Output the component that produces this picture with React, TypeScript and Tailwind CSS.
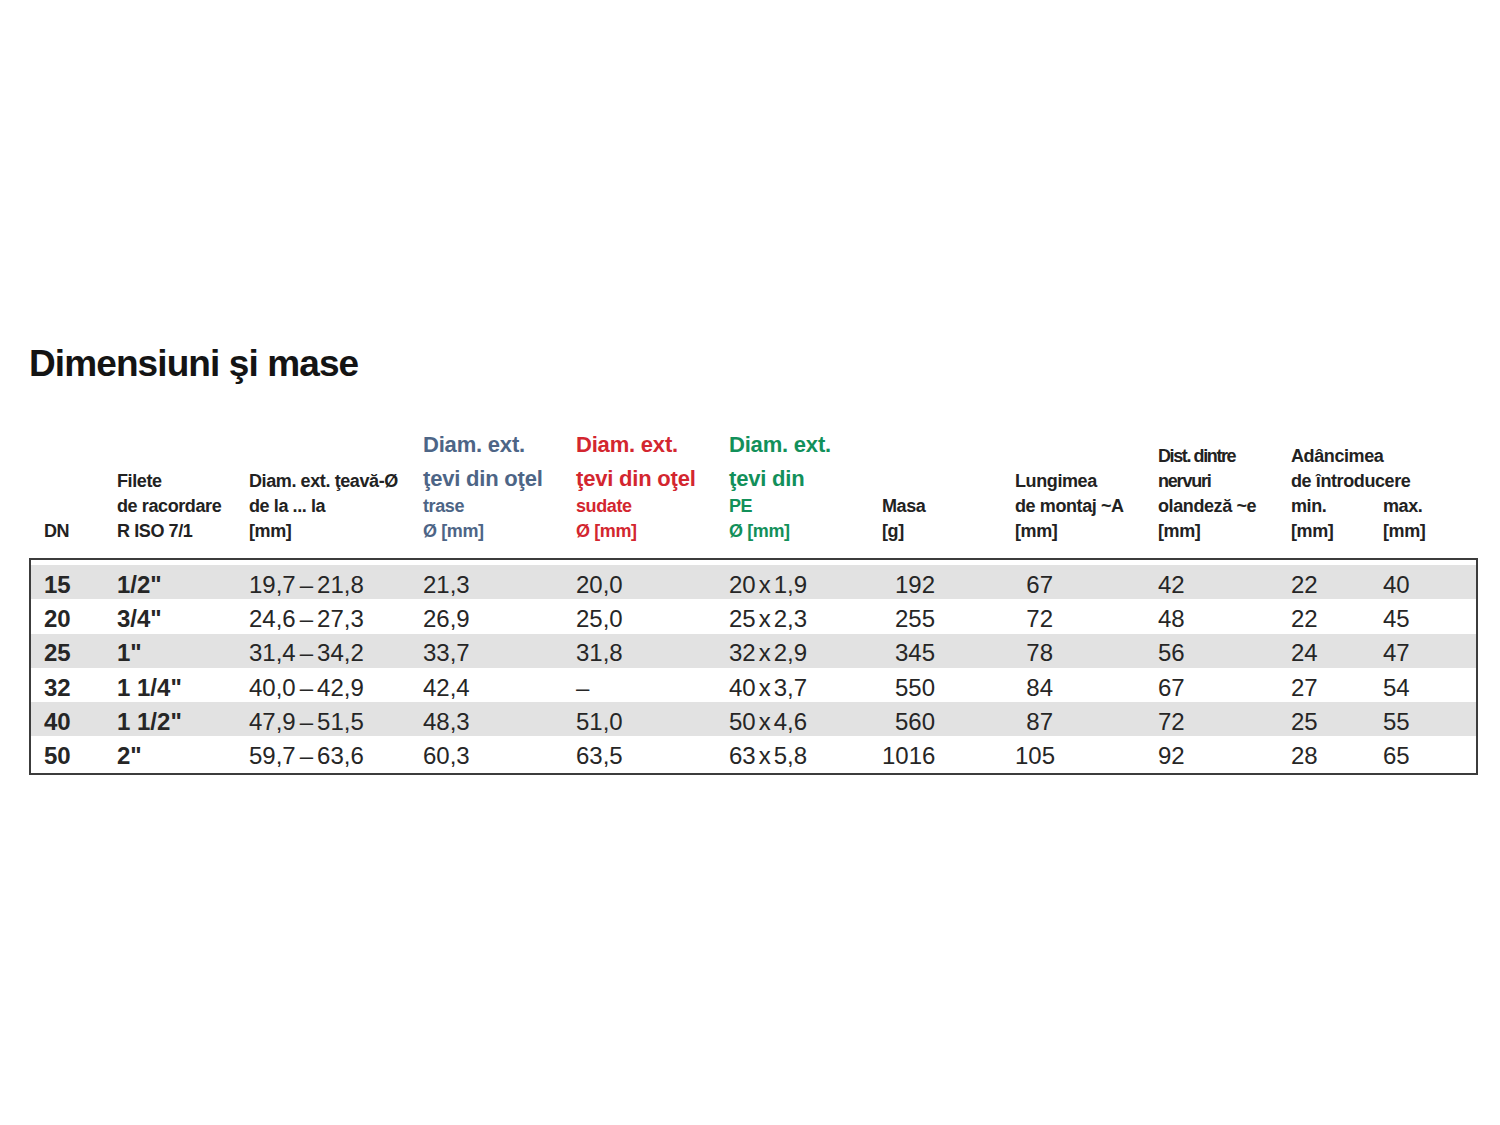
import React from "react";

const rows: string[][] = [
  ["15", "1/2\"", "19,7", "21,8", "21,3", "20,0", "20", "1,9", "192", "67", "42", "22", "40"],
  ["20", "3/4\"", "24,6", "27,3", "26,9", "25,0", "25", "2,3", "255", "72", "48", "22", "45"],
  ["25", "1\"", "31,4", "34,2", "33,7", "31,8", "32", "2,9", "345", "78", "56", "24", "47"],
  ["32", "1 1/4\"", "40,0", "42,9", "42,4", "–", "40", "3,7", "550", "84", "67", "27", "54"],
  ["40", "1 1/2\"", "47,9", "51,5", "48,3", "51,0", "50", "4,6", "560", "87", "72", "25", "55"],
  ["50", "2\"", "59,7", "63,6", "60,3", "63,5", "63", "5,8", "1016", "105", "92", "28", "65"],
];

const gridCols =
  "grid grid-cols-[73px_132px_174px_153px_153px_153px_133px_143px_133px_92px_1fr]";

function HeadCell({ lines, extra }: { lines: React.ReactNode[]; extra?: string }) {
  return (
    <div className={`flex flex-col justify-end ${extra ?? ""}`}>
      {lines.map((l, i) => (
        <div key={i} className="leading-[25px] h-[25px] whitespace-nowrap">
          {l}
        </div>
      ))}
    </div>
  );
}

function ColorHead({ color, l1, l2, l3 }: { color: string; l1: string; l2: string; l3: string }) {
  return (
    <div className={`flex flex-col justify-end ${color}`}>
      <div className="text-[22px] leading-[30px] h-[34px] tracking-[-0.2px] whitespace-nowrap">{l1}</div>
      <div className="text-[22px] leading-[30px] h-[30px] tracking-[-0.2px] whitespace-nowrap">{l2}</div>
      <div className="leading-[25px] h-[25px] whitespace-nowrap">{l3}</div>
      <div className="leading-[25px] h-[25px] whitespace-nowrap">Ø [mm]</div>
    </div>
  );
}

export default function App() {
  return (
    <div
      className="min-h-[1125px] w-[1500px] bg-white text-[#1e1e1e]"
      style={{ fontFamily: '"Liberation Sans", Arial, sans-serif' }}
    >
      <div className="pt-[345px] pl-[29px] w-[1478px]">
        <h1 className="text-[37px] leading-none h-[37px] font-bold tracking-[-0.9px] text-[#141414]">
          Dimensiuni şi mase
        </h1>

        <div className={`${gridCols} mt-[48px] pl-[15px] text-[18px] font-bold tracking-[-0.4px] text-[#222]`}>
          <HeadCell lines={["DN"]} />
          <HeadCell lines={["Filete", "de racordare", "R ISO 7/1"]} />
          <HeadCell lines={["Diam. ext. ţeavă-Ø", "de la ... la", "[mm]"]} />
          <ColorHead color="text-[#4d6586]" l1="Diam. ext." l2="ţevi din oţel" l3="trase" />
          <ColorHead color="text-[#d3262f]" l1="Diam. ext." l2="ţevi din oţel" l3="sudate" />
          <ColorHead color="text-[#12905a]" l1="Diam. ext." l2="ţevi din" l3="PE" />
          <HeadCell lines={["Masa", "[g]"]} />
          <HeadCell lines={["Lungimea", "de montaj ~A", "[mm]"]} />
          <HeadCell
            lines={[
              <span className="tracking-[-1.4px]">Dist. dintre</span>,
              <span className="tracking-[-1.2px]">nervuri</span>,
              "olandeză ~e",
              "[mm]",
            ]}
          />
          <div className="col-span-2 flex flex-col justify-end">
            <div className="leading-[25px] h-[25px] whitespace-nowrap">Adâncimea</div>
            <div className="leading-[25px] h-[25px] whitespace-nowrap">de întroducere</div>
            <div className="grid grid-cols-[92px_1fr]">
              <div className="leading-[25px] h-[25px]">min.</div>
              <div className="leading-[25px] h-[25px]">max.</div>
              <div className="leading-[25px] h-[25px]">[mm]</div>
              <div className="leading-[25px] h-[25px]">[mm]</div>
            </div>
          </div>
        </div>

        <div className="mt-[14px] w-[1449px] border-2 border-[#3c3c3c] pt-[5px] pb-[2px] text-[24px] text-[#262626]">
          {rows.map((r, i) => (
            <div
              key={i}
              className={`${gridCols} pl-[13px] pt-[5px] h-[34.3px] items-center leading-none ${
                i % 2 === 0 ? "bg-[#e2e2e2]" : "bg-white"
              }`}
            >
              <div className="font-bold">{r[0]}</div>
              <div className="font-bold">{r[1]}</div>
              <div className="whitespace-nowrap">
                {r[2]}
                <span className="mx-[4px]">–</span>
                {r[3]}
              </div>
              <div>{r[4]}</div>
              <div>{r[5]}</div>
              <div className="whitespace-nowrap">
                {r[6]}
                <span className="mx-[3px]">x</span>
                {r[7]}
              </div>
              <div className="w-[53px] text-right">{r[8]}</div>
              <div className="w-[38px] text-right">{r[9]}</div>
              <div>{r[10]}</div>
              <div>{r[11]}</div>
              <div>{r[12]}</div>
            </div>
          ))}
        </div>
      </div>
    </div>
  );
}
